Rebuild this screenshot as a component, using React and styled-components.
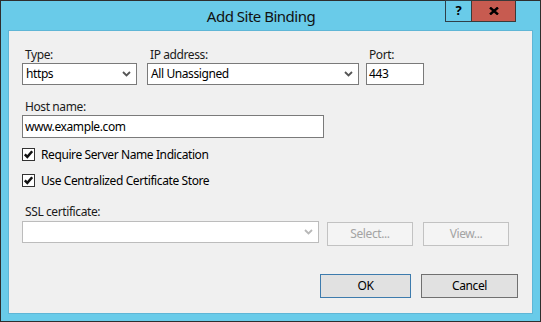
import React from "react";
import styled, { createGlobalStyle } from "styled-components";

const GlobalStyle = createGlobalStyle`
  html, body {
    margin: 0;
    padding: 0;
    background: #ffffff;
  }
  body {
    font-family: "Segoe UI", "Noto Sans", sans-serif;
    font-size: 12px;
    letter-spacing: -0.4px;
    color: #000;
  }
`;

// the little arrow on the right of a combo box
function Chevron({ color }) {
  return (
    <svg width="9" height="6" viewBox="0 0 9 6">
      <polyline
        points="1,1 4.5,4.5 8,1"
        fill="none"
        stroke={color}
        strokeWidth="1.8"
      />
    </svg>
  );
}

function CheckMark() {
  return (
    <svg width="11" height="11" viewBox="0 0 11 11">
      <polyline
        points="1.8,5.3 4.3,7.8 9.2,2.2"
        fill="none"
        stroke="#111"
        strokeWidth="2.5"
      />
    </svg>
  );
}

function CloseGlyph() {
  return (
    <svg width="10" height="8" viewBox="0 0 10 8">
      <path d="M1 0.5 L9 7.5 M9 0.5 L1 7.5" stroke="#000" strokeWidth="2.4" />
    </svg>
  );
}

export default function App() {
  return (
    <>
      <GlobalStyle />
      <Window>
        <TitleBar>
          <Title>Add Site Binding</Title>
          <Controls>
            <HelpButton>?</HelpButton>
            <CloseButton>
              <CloseGlyph />
            </CloseButton>
          </Controls>
        </TitleBar>
        <Client>
          <TopRow>
            <Field width="115px">
              <Label>Type:</Label>
              <Combo>
                <ComboText>https</ComboText>
                <Chevron color="#555" />
              </Combo>
            </Field>
            <Field width="212px">
              <Label>IP address:</Label>
              <Combo>
                <ComboText>All Unassigned</ComboText>
                <Chevron color="#555" />
              </Combo>
            </Field>
            <Field width="58px">
              <Label>Port:</Label>
              <TextBox>443</TextBox>
            </Field>
          </TopRow>

          <HostField>
            <Label>Host name:</Label>
            <TextBox tall>www.example.com</TextBox>
          </HostField>

          <CheckRow top="10px">
            <CheckBox>
              <CheckMark />
            </CheckBox>
            <span>Require Server Name Indication</span>
          </CheckRow>
          <CheckRow top="13px">
            <CheckBox>
              <CheckMark />
            </CheckBox>
            <span>Use Centralized Certificate Store</span>
          </CheckRow>

          <SslLabel>SSL certificate:</SslLabel>
          <SslRow>
            <Combo disabled width="297px">
              <ComboText />
              <Chevron color="#b8b8b8" />
            </Combo>
            <FlatButton disabled>Select...</FlatButton>
            <FlatButton disabled>View...</FlatButton>
          </SslRow>

          <Footer>
            <DialogButton primary>OK</DialogButton>
            <DialogButton wide>Cancel</DialogButton>
          </Footer>
        </Client>
      </Window>
    </>
  );
}

const Window = styled.div`
  width: 541px;
  height: 322px;
  box-sizing: border-box;
  border: 1px solid #2e2e2e;
  background: #69cbe9;
  display: flex;
  flex-direction: column;
`;

const TitleBar = styled.div`
  height: 29px;
  display: flex;
  align-items: flex-start;
`;

const Title = styled.div`
  flex: 1;
  padding-left: 76px;
  text-align: center;
  font-size: 15px;
  letter-spacing: -0.5px;
  line-height: 30px;
  color: #111;
`;

const Controls = styled.div`
  display: flex;
  margin-top: -1px;
  margin-right: 24px;
`;

const HelpButton = styled.div`
  width: 27px;
  height: 22px;
  box-sizing: border-box;
  border: 1px solid #2f3f48;
  background: #69cbe9;
  font-weight: bold;
  font-size: 13px;
  line-height: 19px;
  text-align: center;
  color: #000;
`;

const CloseButton = styled.div`
  width: 45px;
  height: 22px;
  box-sizing: border-box;
  margin-left: -1px;
  border: 1px solid #3a3a3a;
  background: #c75b50;
  display: flex;
  align-items: center;
  justify-content: center;
`;

const Client = styled.div`
  flex: 1;
  margin: 0 7px 7px;
  border: 1px solid #5fb6d6;
  background: #f0f0f0;
  padding: 16px 14px 0 13px;
  display: flex;
  flex-direction: column;
`;

const TopRow = styled.div`
  display: flex;
  gap: 10px;

  & > :last-child {
    margin-left: -3px;
  }
`;

const Field = styled.div`
  width: ${(p) => p.width};
  display: flex;
  flex-direction: column;
`;

const Label = styled.div`
  height: 16px;
  line-height: 16px;
  padding-left: 3px;
  color: #1b1b1b;
`;

const Combo = styled.div`
  width: ${(p) => p.width || "auto"};
  height: 22px;
  box-sizing: border-box;
  border: 1px solid ${(p) => (p.disabled ? "#bcbcbc" : "#7a7a7a")};
  background: #fff;
  display: flex;
  align-items: center;
  padding: 0 5px 0 3px;
`;

const ComboText = styled.span`
  flex: 1;
  line-height: 20px;
`;

const TextBox = styled.div`
  width: ${(p) => (p.tall ? "302px" : "auto")};
  height: ${(p) => (p.tall ? "23px" : "22px")};
  box-sizing: border-box;
  border: 1px solid #7a7a7a;
  background: #fff;
  padding-left: 2px;
  line-height: ${(p) => (p.tall ? "21px" : "20px")};
`;

const HostField = styled.div`
  margin-top: 14px;
  display: flex;
  flex-direction: column;
`;

const CheckRow = styled.div`
  margin-top: ${(p) => p.top};
  display: flex;
  align-items: center;
  gap: 6px;
  height: 13px;
  line-height: 13px;
`;

const CheckBox = styled.div`
  width: 13px;
  height: 13px;
  box-sizing: border-box;
  border: 1px solid #333;
  background: #fff;
  display: flex;
  align-items: center;
  justify-content: center;
`;

const SslLabel = styled(Label)`
  margin-top: 17px;
  margin-bottom: 1px;
`;

const SslRow = styled.div`
  display: flex;
  align-items: flex-start;
  gap: 8px;

  & > :last-child {
    margin-left: 2px;
  }
`;

const FlatButton = styled.div`
  margin-top: 1px;
  width: 86px;
  height: 24px;
  box-sizing: border-box;
  border: 1px solid #c2c2c2;
  background: #f4f4f4;
  color: #a3a3a3;
  text-align: center;
  line-height: 22px;
`;

const Footer = styled.div`
  margin-top: 28px;
  display: flex;
  justify-content: flex-end;
  gap: 10px;
`;

const DialogButton = styled.div`
  width: ${(p) => (p.wide ? "97px" : "91px")};
  height: 24px;
  box-sizing: border-box;
  border: 1px solid ${(p) => (p.primary ? "#3d7bad" : "#707070")};
  background: #e1e1e1;
  text-align: center;
  line-height: 22px;
`;
